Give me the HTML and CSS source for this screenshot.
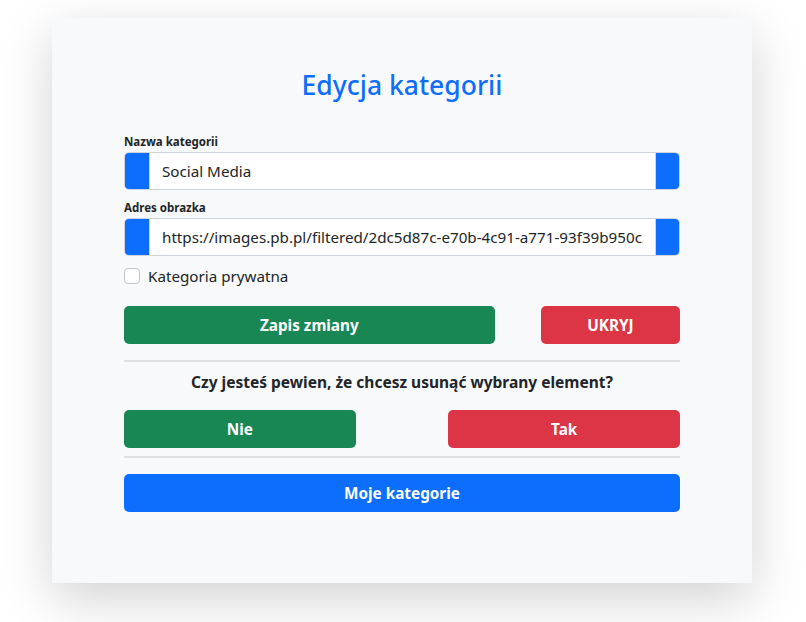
FILE: index.html
```html
<!DOCTYPE html>
<html lang="pl">
<head>
<meta charset="utf-8">
<title>Edycja kategorii</title>
<link rel="stylesheet" href="styles.css">
</head>
<body>
<main class="card">
  <h2 class="title">Edycja kategorii</h2>
  <form class="form">
    <label class="label label-first" for="name">Nazwa kategorii</label>
    <div class="input-group">
      <span class="addon addon-left"></span>
      <input class="input" id="name" type="text" value="Social Media">
      <span class="addon addon-right"></span>
    </div>
    <label class="label label-next" for="img">Adres obrazka</label>
    <div class="input-group">
      <span class="addon addon-left"></span>
      <input class="input" id="img" type="text" value="https://images.pb.pl/filtered/2dc5d87c-e70b-4c91-a771-93f39b950c2a/">
      <span class="addon addon-right"></span>
    </div>
    <div class="check-row">
      <input class="check" id="priv" type="checkbox">
      <label class="check-label" for="priv">Kategoria prywatna</label>
    </div>
    <div class="grid row-save">
      <button type="button" class="btn btn-green span-save">Zapis zmiany</button>
      <button type="button" class="btn btn-red span-hide">UKRYJ</button>
    </div>
    <hr class="rule rule-first">
    <p class="question">Czy jesteś pewien, że chcesz usunąć wybrany element?</p>
    <div class="grid row-confirm">
      <button type="button" class="btn btn-green span-no">Nie</button>
      <button type="button" class="btn btn-red span-yes">Tak</button>
    </div>
    <hr class="rule rule-second">
    <button type="button" class="btn btn-blue btn-full">Moje kategorie</button>
  </form>
</main>
</body>
</html>
```
FILE: styles.css
```css
* { box-sizing: border-box; }

html { background: #ffffff; }

body {
  margin: 0;
  padding: 18px 0 39px;
  min-height: 622px;
  background: #ffffff;
  font-family: "Noto Sans", "Open Sans", sans-serif;
  color: #212529;
}

.card {
  margin: 0 0 0 52px;
  width: 700px;
  height: 565px;
  padding: 51px 72px 0;
  background: #f8f9fa;
  box-shadow: 0 16px 48px rgba(0, 0, 0, 0.175);
}

.title {
  margin: 0;
  font-size: 26.5px;
  line-height: 32px;
  font-weight: 500;
  text-align: center;
  color: #0d6efd;
}

.form {
  display: flex;
  flex-direction: column;
}

.label {
  display: block;
  font-size: 11.5px;
  line-height: 15px;
  font-weight: 700;
  color: #212529;
  margin-bottom: 3px;
}

.label-first { margin-top: 33px; }
.label-next { margin-top: 10px; }

.input-group {
  display: flex;
  height: 38px;
  border: 1px solid #ced4da;
  border-radius: 5px;
  overflow: hidden;
  background: #fff;
}

.addon {
  flex: 0 0 auto;
  background: #0d6efd;
}

.addon-left { width: 24px; }
.addon-right { width: 24px; border-left: 1px solid #ced4da; }

.input {
  flex: 1 1 auto;
  min-width: 0;
  border: 0;
  border-left: 1px solid #ced4da;
  padding: 0 12px;
  font: inherit;
  font-size: 15.2px;
  color: #212529;
  background: #fff;
  outline: none;
}

.check-row {
  display: flex;
  align-items: center;
  gap: 8px;
  height: 24px;
  margin-top: 8px;
}

.check {
  appearance: none;
  -webkit-appearance: none;
  margin: 0;
  width: 16px;
  height: 16px;
  border: 1px solid #c3c6ca;
  border-radius: 4px;
  background: #fff;
}

.check-label {
  font-size: 15.2px;
  line-height: 24px;
  color: #212529;
}

.grid {
  display: grid;
  grid-template-columns: repeat(12, 1fr);
}

.row-save { margin-top: 18px; }
.row-confirm { margin-top: 16px; }

.span-save { grid-column: 1 / span 8; }
.span-hide { grid-column: 10 / span 3; }
.span-no { grid-column: 1 / span 5; }
.span-yes { grid-column: 8 / span 5; }

.btn {
  height: 38px;
  border: 0;
  border-radius: 5px;
  font: inherit;
  font-size: 15.3px;
  font-weight: 700;
  color: #fff;
  cursor: pointer;
}

.btn-green { background: #198754; }
.btn-red { background: #dc3545; }
.btn-blue { background: #0d6efd; }
.btn-full { width: 100%; margin-top: 16px; }

.rule {
  margin: 0;
  border: 0;
  height: 2px;
  background: #dee0e4;
}

.rule-first { margin-top: 16px; }
.rule-second { margin-top: 8px; }

.question {
  margin: 8px 0 0;
  font-size: 15.5px;
  line-height: 24px;
  font-weight: 700;
  text-align: center;
  color: #212529;
}
```
